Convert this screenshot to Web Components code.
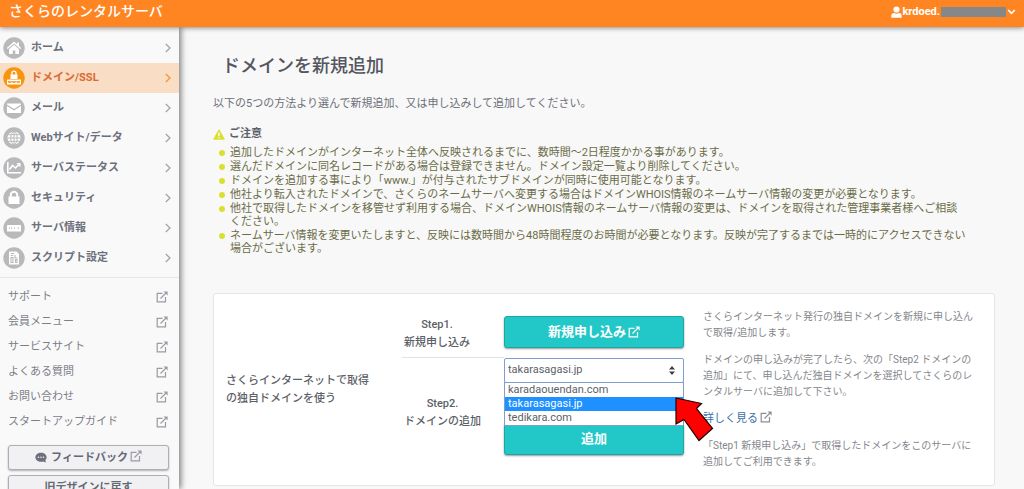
<!DOCTYPE html>
<html lang="ja">
<head>
<meta charset="utf-8">
<meta name="viewport" content="width=device-width, initial-scale=1">
<title>さくらのレンタルサーバ</title>
<style>
body { margin: 0; font: 11px/16px Roboto, "Noto Sans CJK JP", sans-serif; color: #5c5f68; background: #f8f8f8; }
</style>
</head>
<body>
<app-shell>
  <app-header slot="header" user="krdoed.">さくらのレンタルサーバ</app-header>
  <side-nav slot="nav"></side-nav>
  <page-title>ドメインを新規追加</page-title>
  <page-lead>以下の5つの方法より選んで新規追加、又は申し込みして追加してください。</page-lead>
  <notice-list heading="ご注意">
    <notice-item>追加したドメインがインターネット全体へ反映されるまでに、数時間～2日程度かかる事があります。</notice-item>
    <notice-item>選んだドメインに同名レコードがある場合は登録できません。ドメイン設定一覧より削除してください。</notice-item>
    <notice-item>ドメインを追加する事により「www.」が付与されたサブドメインが同時に使用可能となります。</notice-item>
    <notice-item>他社より転入されたドメインで、さくらのネームサーバへ変更する場合はドメインWHOIS情報のネームサーバ情報の変更が必要となります。</notice-item>
    <notice-item>他社で取得したドメインを移管せず利用する場合、ドメインWHOIS情報のネームサーバ情報の変更は、ドメインを取得された管理事業者様へご相談<br>ください。</notice-item>
    <notice-item>ネームサーバ情報を変更いたしますと、反映には数時間から48時間程度のお時間が必要となります。反映が完了するまでは一時的にアクセスできない<br>場合がございます。</notice-item>
  </notice-list>
  <domain-card></domain-card>
</app-shell>

<script>
const define = (name, html, setup) => customElements.define(name, class extends HTMLElement {
  connectedCallback() {
    if (this.shadowRoot) return;
    this.attachShadow({ mode: "open" }).innerHTML = html;
    if (setup) setup(this, this.shadowRoot);
  }
});

define("app-shell", `
<style>
:host { display: grid; grid-template: auto minmax(0, 1fr) / 179px minmax(0, 1fr); height: 100vh; overflow: hidden; }
header { grid-column: 1 / -1; z-index: 2; }
nav { z-index: 1; background: #f9f9fa; box-shadow: 2px 0 6px rgba(0,0,0,.5); overflow: hidden; }
main { padding: 28px 29px 0 34px; overflow: hidden; }
</style>
<header><slot name="header"></slot></header>
<nav><slot name="nav"></slot></nav>
<main><slot></slot></main>`);

define("app-header", `
<style>
:host { display: flex; justify-content: space-between; height: 27px; padding: 0 8px 6px 9px; box-sizing: border-box;
  align-items: center; background: #ff8522; color: #fff; box-shadow: 0 1px 5px rgba(0,0,0,.45); }
.brand { font-size: 14px; line-height: 20px; font-weight: 500; }
button { display: flex; align-items: center; border: 0; padding: 2px 0 0; background: none; color: inherit; font: 700 11px/16px Roboto, "Noto Sans CJK JP", sans-serif; }
.mask { width: 65px; height: 10px; background: #858789; margin: 0 1px; }
</style>
<span class="brand"><slot></slot></span>
<button type="button" aria-label="アカウント">
  <svg width="11" height="12" viewBox="0 0 11 12" fill="#fff"><circle cx="5.5" cy="3.5" r="3.1"/><path d="M.3 11.8V9.6Q.5 7 3 7q2.500 1.500 5 0 2.500 0 2.700 2.600v2.200z"/></svg>
  <span class="user"></span><span class="mask"></span>
  <svg width="9" height="8" viewBox="0 0 9 8" fill="none" stroke="#fff" stroke-width="1.700"><path d="M1.200 2l3.300 3.300L7.800 2"/></svg>
</button>`, (el, root) => { root.querySelector(".user").textContent = el.getAttribute("user"); });

define("external-icon", `
<style>:host { display: inline-flex; } svg { display: block; }</style>
<svg width="12" height="12" viewBox="0 0 12 12" fill="none" stroke="currentColor" stroke-width="1.200"><path d="M6.500 2.300H1.200v8.500h8.300V6M4.500 7.500L10 2"/><path d="M7.500 .4h4.100v4.100z" fill="currentColor" stroke="none"/></svg>`);

const glyphs = {
  home: '<path d="M11 4.500L3.800 11l1 1L11 6.500l6.200 5.500 1-1-2.200-2V5.500h-2v1.700z"/><path d="M11 7.700l-5 4.500V17h3.700v-3.500h2.600V17H16v-4.800z"/>',
  domain: '<path d="M8.300 7.500V6.200a2.700 2.700 0 015.400 0v1.300h.8V12h-7V7.500zm1.300 0h2.800V6.200a1.400 1.400 0 00-2.800 0z"/><path d="M4 12.500h14v5H4z"/><path stroke="#f79410" stroke-width=".9" fill="none" d="M5.300 14l.8 2 .8-2 .8 2 .8-2M9.400 14l.8 2 .8-2 .8 2 .8-2M13.600 14l.8 2 .8-2 .8 2 .8-2"/>',
  mail: '<path d="M4 6.500h14v1L11 12 4 7.500z"/><path d="M4 9l7 4.500L18 9v7H4z"/>',
  web: '<circle cx="11" cy="11" r="6.500"/><path stroke="#b9b9bb" fill="none" d="M4.500 11h13M5.500 7.700h11M5.500 14.300h11M11 4.500v13"/><ellipse stroke="#b9b9bb" fill="none" cx="11" cy="11" rx="3.200" ry="6.500"/>',
  status: '<path d="M4 5h1.600v10H18v1.500H4z"/><path fill="none" stroke="#fff" stroke-width="1.600" d="M6.500 12.500l3-4 3 2.500 3.500-3.500"/><path d="M13.300 6H17.500v4.200z"/>',
  security: '<path d="M6.800 9.500V8a4.200 4.200 0 018.400 0v1.500h1.300V17h-11V9.500zm2 0h4.400V8a2.200 2.200 0 00-4.400 0z"/>',
  server: '<path d="M4 8h14v6.500H4z"/><path fill="#b9b9bb" d="M6 10.500h1v1.200H6zM8 10.500h1v1.200H8zM11 10.500h1v1.200h-1zM14.500 10.500h1.300v1.200h-1.300z"/>',
  script: '<path d="M6 4.500h7.500L16 7v10.500H6z"/><path fill="none" stroke="#b9b9bb" stroke-width="1.100" d="M7.800 6.500h3.500M7.800 8.500h2.500M8 10.500h2v5H8zM12 8v3h2.500M12.500 12.500h1.500v3h-1.500z"/>'
};

define("nav-item", `
<style>
:host { display: block; }
a { display: flex; align-items: center; gap: 6px; height: 30px; padding: 0 7px 0 3px; color: #6d707b; font-weight: 700; text-decoration: none; }
.label { flex: 1; }
.disc { fill: #b9b9bb; }
.chev { stroke: #a2a4aa; }
:host([current]) a { background: #f9ddc5; color: #db6a32; }
:host([current]) .disc { fill: #f79410; }
:host([current]) .chev { stroke: #ee9a3a; }
</style>
<a href="#"><svg width="22" height="22" viewBox="0 0 22 22" fill="#fff"><circle class="disc" cx="11" cy="11" r="10.700"/><g></g></svg>
<span class="label"><slot></slot></span>
<svg width="8" height="10" viewBox="0 0 8 10" fill="none" stroke-width="1.300"><path class="chev" d="M1.800 1l4.200 4-4.200 4"/></svg></a>`,
(el, root) => { root.querySelector("g").innerHTML = glyphs[el.getAttribute("icon")]; });

define("side-link", `
<style>
:host { display: block; }
a { display: flex; align-items: center; justify-content: space-between; height: 25px; padding: 0 11px 0 8px; color: #7c7e86; text-decoration: none; }
external-icon { color: #9a9ca2; }
</style>
<a href="#"><slot></slot><external-icon></external-icon></a>`);

define("side-nav", `
<style>
:host { display: block; padding-top: 6px; }
.links { margin-top: 4px; padding-top: 6px; border-top: 1px solid #e6e6e8; }
.actions { display: grid; gap: 5px; padding: 11px 10px 0 8px; }
button { display: flex; align-items: center; justify-content: center; height: 25px; padding: 0; border: 1px solid #adafb4; border-radius: 3px;
  background: #f1f1f4; box-shadow: 0 1px 2px rgba(0,0,0,.3); color: #666974; font: 700 11px/16px Roboto, "Noto Sans CJK JP", sans-serif; }
.bubble { margin-right: 4px; }
external-icon { color: #9a9ca2; align-self: flex-start; margin: 4px 0 0 2px; }
</style>
<div>
  <nav-item icon="home">ホーム</nav-item>
  <nav-item icon="domain" current>ドメイン/SSL</nav-item>
  <nav-item icon="mail">メール</nav-item>
  <nav-item icon="web">Webサイト/データ</nav-item>
  <nav-item icon="status">サーバステータス</nav-item>
  <nav-item icon="security">セキュリティ</nav-item>
  <nav-item icon="server">サーバ情報</nav-item>
  <nav-item icon="script">スクリプト設定</nav-item>
</div>
<div class="links">
  <side-link>サポート</side-link>
  <side-link>会員メニュー</side-link>
  <side-link>サービスサイト</side-link>
  <side-link>よくある質問</side-link>
  <side-link>お問い合わせ</side-link>
  <side-link>スタートアップガイド</side-link>
</div>
<div class="actions">
  <button type="button"><svg class="bubble" width="12" height="11" viewBox="0 0 12 11"><path fill="#6d707b" d="M6 .8c3.200 0 5.600 1.900 5.600 4.400 0 1.200-.5 2.200-1.300 3l.8 2.200-3-1A8 8 0 016 9.700C2.900 9.700.4 7.700.4 5.200S2.900.8 6 .8z"/><g fill="#f1f1f4"><circle cx="3.500" cy="5.300" r=".8"/><circle cx="6" cy="5.300" r=".8"/><circle cx="8.500" cy="5.300" r=".8"/></g></svg>フィードバック<external-icon></external-icon></button>
  <button type="button">旧デザインに戻す</button>
</div>`);

define("page-title", `
<style>:host { display: block; padding-left: 9px; } h1 { margin: 0; font-size: 18px; line-height: 22px; font-weight: 500; color: #54565f; }</style>
<h1><slot></slot></h1>`);

define("page-lead", `
<style>:host { display: block; margin-top: 19px; } p { margin: 0; color: #6e7078; }</style>
<p><slot></slot></p>`);

define("notice-list", `
<style>
:host { display: block; margin-top: 14px; }
h2 { display: flex; align-items: center; gap: 4px; margin: 0 0 4px; font-size: 11px; line-height: 16px; font-weight: 700; }
</style>
<h2><svg width="12" height="11" viewBox="0 0 12 11"><path fill="#d9e032" stroke="#d9e032" stroke-linejoin="round" d="M6 .8l5.300 9.400H.7z"/><path stroke="#fff" stroke-width="1.300" d="M6 3.600v3.300M6 7.900v1.300"/></svg><span></span></h2>
<div role="list"><slot></slot></div>`, (el, root) => { root.querySelector("span").textContent = el.getAttribute("heading"); });

define("notice-item", `
<style>
:host { display: flex; gap: 5px; margin-bottom: 1px; padding-left: 6px; line-height: 13px; color: #6b6c47; }
i { flex: none; width: 6px; height: 6px; margin-top: 4px; border-radius: 50%; background: #d9e032; }
</style>
<i></i><div><slot></slot></div>`, el => el.setAttribute("role", "listitem"));

define("action-button", `
<style>
:host { display: block; }
button { display: flex; align-items: center; justify-content: center; gap: 2px; width: 100%; height: 32px; padding: 0; border: 1px solid #1da6a2; border-radius: 3px;
  background: #22c8c8; box-shadow: 0 1px 2px rgba(0,0,0,.4); color: #fff; font: 700 13px/20px Roboto, "Noto Sans CJK JP", sans-serif; }
</style>
<button type="button"><slot></slot></button>`);

define("domain-picker", `
<style>
:host { display: block; position: relative; }
select { display: block; appearance: none; width: 100%; height: 25px; padding: 0 3px; border: 1px solid #7f9fd0; border-radius: 2px;
  background: #fff; color: #5c5f68; font: 11px/16px Roboto, sans-serif; }
.updown { position: absolute; right: 8px; top: 7px; }
ul { position: absolute; z-index: 1; top: 24px; left: 0; right: 0; box-sizing: border-box; margin: 0; padding: 0; list-style: none; background: #fff;
  border: 1px solid #7f9fd0; color: #5c5f68; font: 11px/14px Roboto, sans-serif; }
li { padding: 0 3px; }
li[aria-selected=true] { background: #1e90ff; color: #fff; }
.pointer { position: absolute; z-index: 2; left: calc(100% - 10px); top: 38px; }
</style>
<select aria-label="ドメイン"><option selected>takarasagasi.jp</option></select>
<svg class="updown" width="8" height="11" viewBox="0 0 8 11" fill="#3c3f45"><path d="M4 1l3 3.600H1zM4 10L1 6.400h6z"/></svg>
<ul role="listbox" aria-label="ドメイン"><li role="option">karadaouendan.com</li><li role="option" aria-selected="true">takarasagasi.jp</li><li role="option">tedikara.com</li></ul>
<svg class="pointer" width="42" height="48" viewBox="0 0 42 48"><path fill="#fe0000" stroke="#1c0000" stroke-width="1.200" d="M2 2l25.500 5.500-5 5L38.500 32.500 25 44.500 10 23.500 2 28z"/></svg>`);

define("domain-card", `
<style>
:host { display: grid; grid-template-columns: minmax(0, 176fr) 102px 180px minmax(0, 310fr); align-items: center; box-sizing: border-box; margin-top: 38px; padding: 15px 0 15px 12px;
  border: 1px solid #e6e6e8; border-radius: 3px; background: #fff; }
h2, h3, p { margin: 0; }
h2, h3 { font-size: 11px; line-height: 18px; font-weight: 500; }
h2 { padding-right: 28px; }
.steps { grid-column: 2 / 4; }
.step { display: grid; grid-template-columns: 102px minmax(0, 1fr); align-items: center; }
.step h3 { justify-self: start; padding-left: 2px; text-align: center; }
.first h3 { align-self: stretch; justify-self: stretch; padding-top: 4px; border-bottom: 1px solid #e2e2e4; }
.first h3 span { display: block; width: max-content; }
.first { height: 46px; }
.first action-button { align-self: start; padding-top: 4px; }
.second { height: 110px; }
.controls { display: grid; gap: 40px; align-self: start; }
.help { display: grid; gap: 11px; padding: 0 14px 0 19px; font-size: 10px; line-height: 16px; color: #85878c; }
.more { display: flex; gap: 2px; }
.more a { color: #3a70a8; text-decoration: none; font-size: 11px; }
.more external-icon { color: #8c8e94; }
</style>
<h2>さくらインターネットで取得の独自ドメインを使う</h2>
<div class="steps">
  <div class="step first"><h3><span>Step1.<br>新規申し込み</span></h3><action-button>新規申し込み<external-icon></external-icon></action-button></div>
  <div class="step second"><h3>Step2.<br>ドメインの追加</h3><div class="controls"><domain-picker></domain-picker><action-button>追加</action-button></div></div>
</div>
<div class="help">
  <p>さくらインターネット発行の独自ドメインを新規に申し込んで取得/追加します。</p>
  <p>ドメインの申し込みが完了したら、次の「Step2 ドメインの追加」にて、申し込んだ独自ドメインを選択してさくらのレンタルサーバに追加して下さい。</p>
  <p class="more"><a href="#">詳しく見る</a><external-icon></external-icon></p>
  <p>「Step1 新規申し込み」で取得したドメインをこのサーバに追加してご利用できます。</p>
</div>`);
</script>
</body>
</html>
